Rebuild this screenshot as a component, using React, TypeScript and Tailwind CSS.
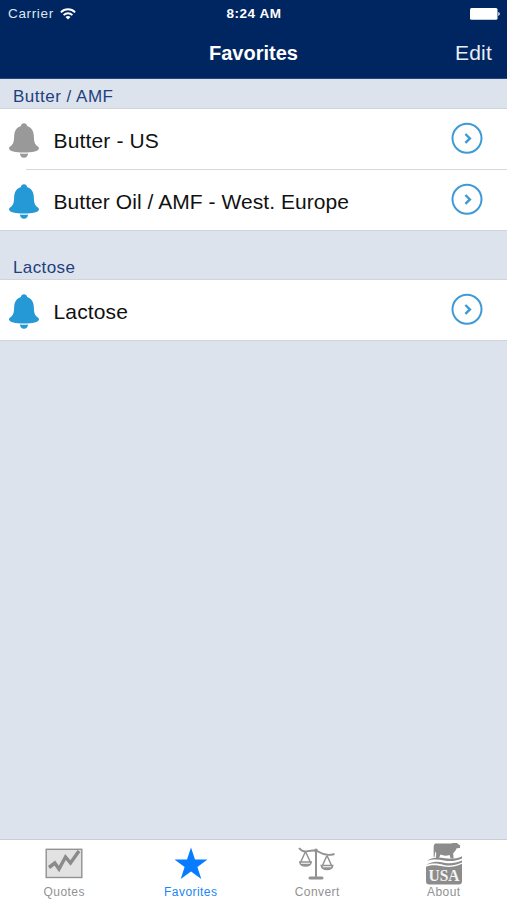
import type { ReactNode } from "react";

type Quote = {
  id: number;
  name: string;
  alert: boolean;
  textClass: string;
};

type Group = {
  title: string;
  headerClass: string;
  items: Quote[];
};

const groups: Group[] = [
  {
    title: "Butter / AMF",
    headerClass: "h-[29px] pt-[7px] tracking-[0.5px]",
    items: [
      { id: 1, name: "Butter - US", alert: false, textClass: "tracking-[0.15px]" },
      { id: 2, name: "Butter Oil / AMF - West. Europe", alert: true, textClass: "tracking-[0.06px]" },
    ],
  },
  {
    title: "Lactose",
    headerClass: "h-[48px] pt-[26px] tracking-[0.4px]",
    items: [{ id: 3, name: "Lactose", alert: true, textClass: "tracking-[0.15px]" }],
  },
];

function BellIcon({ active }: { active: boolean }) {
  return (
    <svg width="30" height="35" viewBox="0 0 30 35" className={active ? "text-[#2499d5]" : "text-[#999999]"}>
      <path
        fill="currentColor"
        d="M15 .2c1.700 0 2.800 1 3.100 2.700 4.500 1.600 6.500 5 6.700 9.600.2 6 .8 8.500 3.400 10.500 1.100.8 1.800 1.400 1.800 2.300 0 3-6.600 4.300-15 4.300S0 28.300 0 25.300c0-.9.7-1.500 1.800-2.300 2.600-2 3.200-4.500 3.400-10.500.2-4.600 2.200-8 6.700-9.600C12.200 1.200 13.300.2 15 .2z"
      />
      <path fill="currentColor" d="M11 30.500q4 .4 8 0c0 2.600-1.500 4.200-4 4.200s-4-1.600-4-4.200z" />
    </svg>
  );
}

function DisclosureIcon() {
  return (
    <svg width="32" height="32" viewBox="0 0 32 32" fill="none" stroke="#3d9ad6">
      <circle cx="16" cy="16.300" r="14.500" strokeWidth="2" />
      <path d="M14.400 12l4.500 4.400-4.500 4.400" strokeWidth="2.400" />
    </svg>
  );
}

function WifiIcon() {
  return (
    <svg width="16" height="12" viewBox="0 0 16 12" fill="none" stroke="#fff" strokeWidth="1.900">
      <path d="M.9 4.300c4-4 10.200-4 14.200 0" />
      <path d="M3.600 7.100c2.500-2.500 6.300-2.500 8.800 0" />
      <path d="M8 11.500L5.500 8.900c1.400-1.200 3.600-1.200 5 0z" fill="#fff" stroke="none" />
    </svg>
  );
}

function BatteryIcon() {
  return (
    <svg width="30" height="13" viewBox="0 0 30 13" fill="#fff">
      <rect x="0" y="0" width="27.500" height="11.700" rx="1.500" />
      <path d="M28.300 4c1.900.8 1.900 3.100 0 3.900z" />
    </svg>
  );
}

function QuotesIcon() {
  return (
    <svg width="38" height="42" viewBox="0 0 38 42" fill="none">
      <rect x="1.200" y="6.300" width="35.600" height="28.200" fill="#e2e2e2" stroke="#929292" strokeWidth="1.400" />
      <path d="M4 24.500l5.800-4.500 4.200 6 6.500-12 5 6 8.500-12" stroke="#8b8b8b" strokeWidth="3.500" />
    </svg>
  );
}

function StarIcon() {
  return (
    <svg width="34" height="42" viewBox="0 0 34 42" fill="#087cff">
      <path d="M17 4.500l4 12h12.500l-10.100 7.400 3.900 12L17 28.500l-10.300 7.400 3.900-12L.5 16.500H13z" />
    </svg>
  );
}

function ScalesIcon() {
  return (
    <svg width="38" height="42" viewBox="0 0 38 42" fill="none" stroke="#929292">
      <path d="M1 5c2.500 3.200 6 4 9 3.200 4-1 7-1.700 10.500.6 5.500 3.600 10 4 16 2.200" strokeWidth="1.900" />
      <circle cx="18" cy="7.300" r="1.800" fill="#929292" stroke="none" />
      <path d="M18 7.500v27" strokeWidth="2" />
      <path d="M12 35h12" strokeWidth="3" strokeLinecap="round" />
      <path d="M7.500 8.500L2.500 19.500M7.500 8.500L12.500 19.500M29 12.500L24 23.500M29 12.500L34 23.500" strokeWidth="1.500" />
      <path d="M1.700 19h11.600c-.7 5.500-10.900 5.500-11.600 0zM23.200 22.500h11.600c-.7 5.500-10.900 5.500-11.600 0z" strokeWidth="1.400" />
      <path d="M2 20.800h11c-1.500 3-9.500 3-11 0zM23.500 24.300h11c-1.500 3-9.500 3-11 0z" fill="#929292" stroke="none" />
    </svg>
  );
}

function AboutIcon() {
  return (
    <svg width="38" height="42" viewBox="0 0 38 42" fill="#8c8c8c">
      <path d="M10.500.5h16c1.500-.8 2.700-1 3.700-.5l1.800-.2 1 1.200 2.200 1.500-.3 2.400-3.200.4-1.500 2.600-2 2.300.4 5.300h-3l-1-3.500c-3.500 1-6.300.8-9.100-.4l-1.500 3.500h-3l.2-5-1-1.500-.7 5.400-.9-.1.100-10.400C8.900 1.600 9.500.8 10.500.5z" />
      <path d="M2 18c6-4.500 12-3.700 18-2.700 5.500.9 11 .8 17-2v2.200c-7 3-12.500 2.900-18 2-5.500-1-10.500-2-17 .5z" />
      <path d="M1 22c7-4.600 12.500-3.300 18-2.300s11 .8 18-2.200v2.100c-7 3.200-12.500 3.400-18 2.300-5.500-1.200-11-2.200-18 .1z" />
      <path d="M1 23.700c7-2.500 12-1.200 17.500-.2 6 1.100 11.500.4 18.500-2.700V38c0 2.500-1 3.500-3.500 3.500h-29C2 41.500 1 40.500 1 38z" />
      <text
        x="19"
        y="37.800"
        textAnchor="middle"
        textLength="31"
        lengthAdjust="spacingAndGlyphs"
        fontSize="17"
        fontWeight="bold"
        fontFamily="'Liberation Serif', serif"
        fill="#f4f4f4"
      >
        USA
      </text>
    </svg>
  );
}

function QuoteRow({ item, last }: { item: Quote; last: boolean }) {
  return (
    <li
      className={`relative flex items-start pl-[9px] pr-[24px] ${
        last ? "h-[60px]" : "h-[61px]"
      }`}
    >
      <div className="pt-[14px]">
        <BellIcon active={item.alert} />
      </div>
      <span className={`ml-[14.500px] flex-1 pt-[18px] text-[21px] leading-[28px] text-[#111] ${item.textClass}`}>
        {item.name}
      </span>
      <button type="button" className="mt-[13px]" aria-label={`Open ${item.name}`}>
        <DisclosureIcon />
      </button>
      {!last && <span className="absolute bottom-0 left-[26px] right-0 h-px bg-[#d8d8db]" />}
    </li>
  );
}

function Tab({ label, icon, active = false }: { label: string; icon: ReactNode; active?: boolean }) {
  return (
    <button
      type="button"
      className={`flex flex-1 flex-col items-center text-[12px] leading-[14px] ${
        active ? "text-[#2186f3]" : "text-[#929292]"
      }`}
    >
      {icon}
      <span className="tracking-[0.45px]">{label}</span>
    </button>
  );
}

export default function App() {
  return (
    <div className="flex h-[900px] w-[507px] flex-col overflow-hidden bg-[#dde3ed] font-['Liberation_Sans',Arial,sans-serif]">
      <header className="h-[79px] border-b border-[#25467d] bg-[#002661] text-white">
        <div className="grid h-[28px] grid-cols-3 items-center pl-[8px] pr-[7px] text-[13.5px]">
          <div className="flex items-center gap-[6px] tracking-[0.65px] text-[#dfe5ef]">
            Carrier
            <WifiIcon />
          </div>
          <span className="text-center font-bold tracking-[0.5px]">8:24 AM</span>
          <div className="flex justify-end">
            <BatteryIcon />
          </div>
        </div>
        <div className="grid h-[50px] grid-cols-3 items-center px-[15px]">
          <span />
          <h1 className="text-center text-[20px] font-bold">Favorites</h1>
          <button type="button" className="text-right text-[21px] tracking-[0.2px] text-[#e8edf7]">
            Edit
          </button>
        </div>
      </header>

      <main className="flex-1">
        {groups.map((group) => (
          <section key={group.title}>
            <h2 className={`pl-[13px] text-[17px] leading-[22px] text-[#1e3f80] ${group.headerClass}`}>
              {group.title}
            </h2>
            <ul className="border-y border-[#d0d4dc] bg-white">
              {group.items.map((item, i) => (
                <QuoteRow key={item.id} item={item} last={i === group.items.length - 1} />
              ))}
            </ul>
          </section>
        ))}
      </main>

      {/* Tab bar */}
      <nav className="flex h-[61px] border-t border-[#c8ced8] bg-white pl-[1px] pt-[3px]">
        <Tab label="Quotes" icon={<QuotesIcon />} />
        <Tab label="Favorites" icon={<StarIcon />} active />
        <Tab label="Convert" icon={<ScalesIcon />} />
        <Tab label="About" icon={<AboutIcon />} />
      </nav>
    </div>
  );
}
